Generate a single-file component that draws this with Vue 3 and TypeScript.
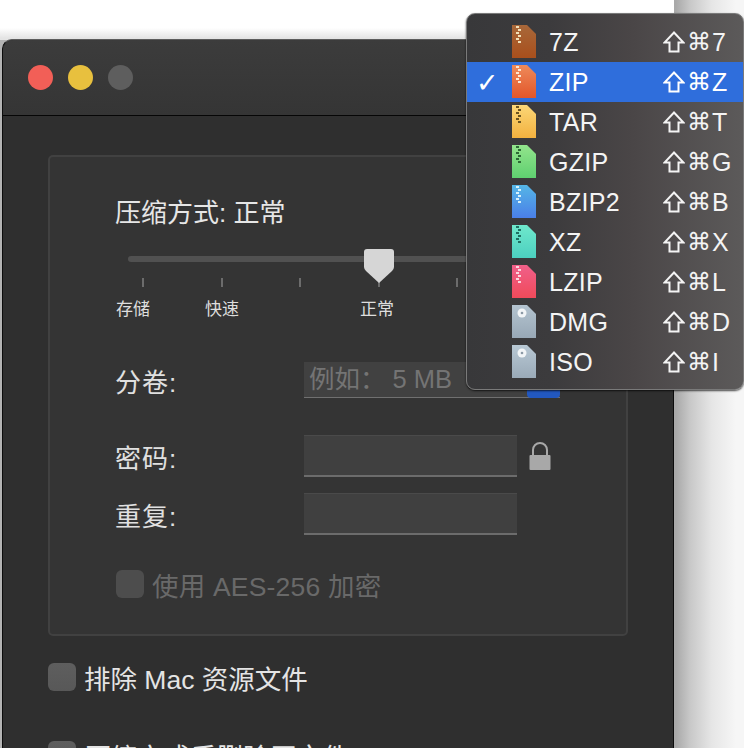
<script setup lang="ts">
// 压缩格式菜单
const formats = [
  { name: '7Z', key: '7', top: '#a8683a', bottom: '#a84f1c', zip: '#f0e0b8' },
  { name: 'ZIP', key: 'Z', top: '#ee8a5a', bottom: '#e2562a', zip: '#fbe6d0', active: true },
  { name: 'TAR', key: 'T', top: '#fbd777', bottom: '#f3b13f', zip: '#6b5420' },
  { name: 'GZIP', key: 'G', top: '#93e48c', bottom: '#5fd070', zip: '#2d6a35' },
  { name: 'BZIP2', key: 'B', top: '#55b6e6', bottom: '#4a7fe8', zip: '#d5f0fa' },
  { name: 'XZ', key: 'X', top: '#6fe8cc', bottom: '#4cd0c0', zip: '#1f6f62' },
  { name: 'LZIP', key: 'L', top: '#f0608a', bottom: '#f04a5a', zip: '#fbd5de' },
  { name: 'DMG', key: 'D', top: '#b4c4d0', bottom: '#98a8b6', disk: true },
  { name: 'ISO', key: 'I', top: '#b8c8d4', bottom: '#9aaab8', disk: true },
]

const ticks = [0, 1, 2, 3, 4, 5]
</script>

<template>
  <div class="screen">
    <div class="window">
      <div class="titlebar">
        <span class="light red"></span>
        <span class="light yellow"></span>
        <span class="light grey"></span>
      </div>

      <div class="content">
        <div class="group">
          <div class="method">压缩方式: 正常</div>
          <div class="slider">
            <div class="track"></div>
            <svg class="thumb" width="32" height="36" viewBox="0 0 32 36">
              <path d="M4 1h24a3 3 0 0 1 3 3v15q0 2-2 4L16 35 3 23q-2-2-2-4V4a3 3 0 0 1 3-3z" fill="#d6d6d6" />
            </svg>
          </div>
          <div class="ticks">
            <i v-for="t in ticks" :key="t"></i>
          </div>
          <div class="levels">
            <span>存储</span>
            <span>快速</span>
            <span>正常</span>
          </div>

          <div class="row split">
            <label>分卷:</label>
            <div class="split-field">
              <span class="placeholder">例如： 5 MB</span>
              <span class="stepper"></span>
            </div>
          </div>

          <div class="row pass">
            <label>密码:</label>
            <div class="field"></div>
            <svg class="lock" width="24" height="30" viewBox="0 0 24 30">
              <path d="M5 14V9a7 7 0 0 1 14 0v5" fill="none" stroke="#a8a8a8" stroke-width="2" />
              <rect x="1.500" y="14" width="21" height="15" rx="1" fill="#a8a8a8" />
            </svg>
          </div>
          <div class="row repeat">
            <label>重复:</label>
            <div class="field"></div>
          </div>

          <div class="check disabled aes">
            <span class="box"></span>
            <span>使用 AES-256 加密</span>
          </div>
        </div>

        <div class="check exclude">
          <span class="box"></span>
          <span>排除 Mac 资源文件</span>
        </div>
        <div class="check remove">
          <span class="box"></span>
          <span>压缩完成后删除原文件</span>
        </div>
      </div>
    </div>

    <!-- 格式下拉菜单 -->
    <div class="menu">
      <div v-for="f in formats" :key="f.name" class="item" :class="{ active: f.active }">
        <span class="mark">{{ f.active ? '✓' : '' }}</span>
        <svg class="file" width="24" height="33" viewBox="0 0 24 33">
          <defs>
            <linearGradient :id="'g' + f.name" x1="0" y1="0" x2="0" y2="1">
              <stop offset="0" :stop-color="f.top" />
              <stop offset="1" :stop-color="f.bottom" />
            </linearGradient>
          </defs>
          <path d="M0 0h15l9 9v24H0z" :fill="`url(#g${f.name})`" />
          <path v-if="!f.disk" d="M4 1h3v2H4zM6 4h3v2H6zM4 7h3v2H4zM6 10h3v2H6zM4 13h3v2H4zM6 16h3v2H6z" :fill="f.zip" />
          <template v-else>
            <circle cx="10" cy="8" r="4.500" fill="#f2f5f7" />
            <circle cx="10" cy="8" r="1.300" fill="#8c9aa6" />
          </template>
        </svg>
        <span class="name">{{ f.name }}</span>
        <span class="shortcut">
          <svg width="22" height="22" viewBox="0 0 22 22">
            <path d="M11 1.500L20.500 11.500H15.500V20.500H6.500V11.500H1.500z" fill="none" stroke="currentColor" stroke-width="2" stroke-linejoin="miter" />
          </svg>
          <span class="cmd">⌘</span>
          <span class="key">{{ f.key }}</span>
        </span>
      </div>
    </div>
  </div>
</template>

<style scoped>
.screen {
  position: relative;
  width: 744px;
  height: 748px;
  overflow: hidden;
  background: linear-gradient(to right, #b4b4b4 0, #a9a9a9 676px, #c8c8c8 690px, #e6e6e6 712px, #f6f6f6 736px);
  font-family: "Liberation Sans", "Noto Sans CJK SC", sans-serif;
}
.screen::before {
  content: '';
  position: absolute;
  left: 0;
  right: 70px;
  top: 0;
  height: 40px;
  background: linear-gradient(to bottom, #ffffff 0, #ffffff 28px, #e4e4e4 38px);
}

/* ==================== 窗口 ==================== */
.window {
  position: absolute;
  left: 2px;
  top: 39px;
  width: 670px;
  height: 780px;
  background: #2f2f2f;
  border: 1px solid #0c0c0c;
  border-top-color: #5c5c5c;
  border-radius: 10px 10px 0 0;
}
.titlebar {
  display: flex;
  align-items: center;
  gap: 15px;
  height: 75px;
  padding-left: 25px;
  background: linear-gradient(to bottom, #3c3c3c, #353535);
  border-bottom: 1px solid #060606;
  border-radius: 10px 10px 0 0;
}
.light {
  width: 25px;
  height: 25px;
  border-radius: 50%;
}
.light.red {
  background: #f25f57;
}
.light.yellow {
  background: #e8c03e;
}
.light.grey {
  background: #5e5e5e;
}
.content {
  padding: 39px 0 0 45px;
}

/* ==================== 分组框 ==================== */
.group {
  box-sizing: border-box;
  width: 580px;
  height: 481px;
  padding: 39px 0 0 65px;
  background: #343434;
  border: 2px solid #414141;
  border-radius: 5px;
}
.method {
  height: 34px;
  line-height: 34px;
  font-size: 26px;
  color: #e6e6e6;
}
.slider {
  position: relative;
  height: 6px;
  margin: 26px 0 0 13px;
}
.track {
  width: 500px;
  height: 6px;
  border-radius: 3px;
  background: #515151;
}
.thumb {
  position: absolute;
  left: 235px;
  top: -8px;
}
.ticks {
  display: flex;
  gap: 76.500px;
  margin: 16px 0 0 27px;
}
.ticks i {
  width: 2px;
  height: 9px;
  background: #6c6c6c;
}
.levels {
  display: flex;
  margin: 11px 0 0 1px;
  font-size: 17px;
  line-height: 24px;
  color: #dedede;
}
.levels span:nth-child(2) {
  margin-left: 55px;
}
.levels span:nth-child(3) {
  margin-left: 121px;
}
.row {
  display: flex;
  align-items: center;
  height: 42px;
  font-size: 26px;
  color: #e0e0e0;
}
.row label {
  width: 189px;
  letter-spacing: 1px;
}
.split {
  margin-top: 37px;
}
.pass {
  margin-top: 34px;
}
.repeat {
  margin-top: 16px;
}
.split-field {
  position: relative;
  box-sizing: border-box;
  width: 256px;
  height: 36px;
  padding-left: 5px;
  line-height: 35px;
  font-size: 25.500px;
  color: #747474;
  background: #414141;
  border-bottom: 1px solid #707070;
}
.stepper {
  position: absolute;
  right: 0;
  bottom: -1px;
  width: 33px;
  height: 10px;
  border-radius: 0 0 4px 4px;
  background: #2258c0;
}
.field {
  box-sizing: border-box;
  width: 213px;
  height: 42px;
  background: #404040;
  border-top: 1px solid #4a4a4a;
  border-bottom: 2px solid #6c6c6c;
}
.lock {
  margin-left: 11px;
}

/* ==================== 复选框 ==================== */
.check {
  display: flex;
  align-items: center;
  gap: 8px;
  height: 30px;
  font-size: 26.500px;
  color: #e4e4e4;
}
.box {
  box-sizing: border-box;
  width: 28px;
  height: 28px;
  border-radius: 6px;
  background: linear-gradient(to bottom, #5e5e5e, #585858);
}
.disabled {
  color: #696969;
  letter-spacing: 0.2px;
}
.disabled .box {
  background: #4d4d4d;
}
.aes {
  margin: 34px 0 0 1px;
}
.exclude {
  margin-top: 26px;
}
.remove {
  margin-top: 48px;
}

/* ==================== 下拉菜单 ==================== */
.menu {
  position: absolute;
  left: 466px;
  top: 13px;
  box-sizing: border-box;
  width: 278px;
  height: 377px;
  padding: 8px 0;
  border-radius: 9px;
  border: 1px solid #7a7a7a;
  background: linear-gradient(to right, #38383a 0, #3c3b3d 30%, #4a4647 60%, #5c5a5a 100%);
  box-shadow: 0 1px 2px rgba(0, 0, 0, 0.7);
  color: #f4f4f4;
}
.item {
  display: flex;
  align-items: center;
  height: 40px;
}
.item.active {
  background: #2f6edc;
  color: #ffffff;
}
.mark {
  width: 45px;
  padding-left: 9px;
  box-sizing: border-box;
  font-size: 27px;
  font-family: "DejaVu Sans", sans-serif;
}
.file {
  flex: none;
  margin-top: -1px;
}
.name {
  width: 114px;
  margin-left: 13px;
  font-size: 25px;
  letter-spacing: 0.3px;
}
.shortcut {
  display: flex;
  align-items: center;
  font-size: 25px;
}
.cmd {
  width: 26px;
  margin-left: 1px;
  font-family: "DejaVu Sans", sans-serif;
  font-size: 24px;
  text-align: center;
}
</style>

<style>
html,
body {
  margin: 0;
  background: #ffffff;
}
</style>
